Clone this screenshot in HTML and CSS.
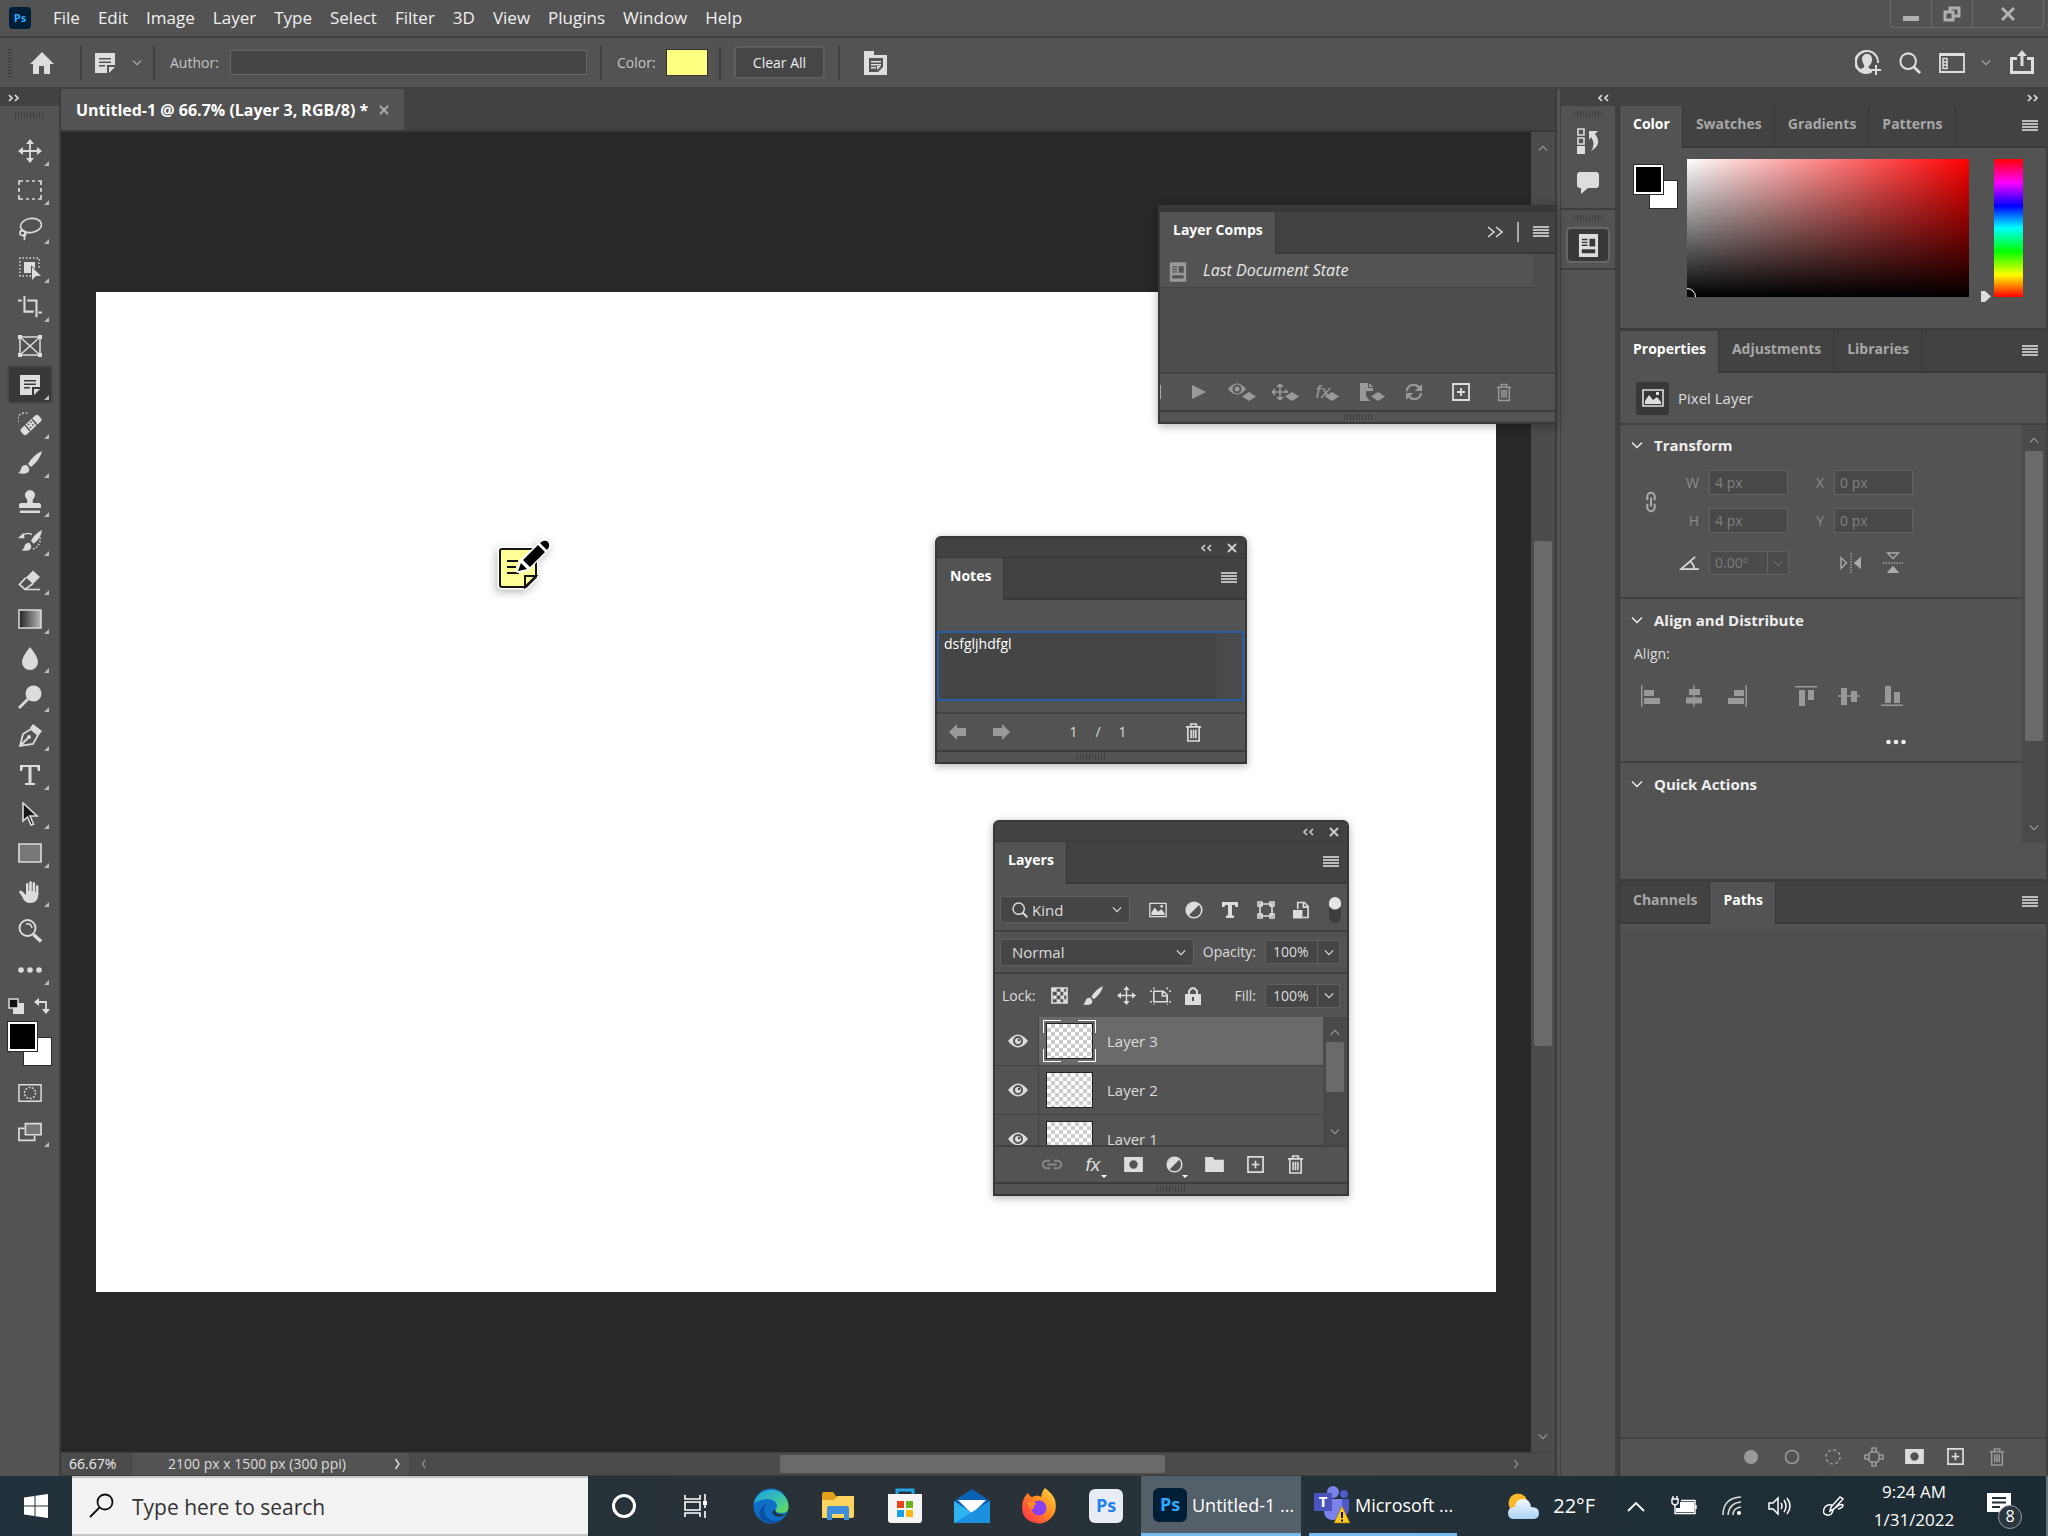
FILE: index.html
```html
<!DOCTYPE html>
<html lang="en">
<head>
<meta charset="utf-8">
<title>Untitled-1 @ 66.7% (Layer 3, RGB/8) *</title>
<link rel="stylesheet" href="styles.css">
</head>
<body>
<svg class="sprite" aria-hidden="true">
  <defs>
    <linearGradient id="g-tool"><stop offset="0" stop-color="#222"/><stop offset="1" stop-color="#bbb"/></linearGradient>
    <linearGradient id="g-edge" x1="0" y1="0" x2="1" y2="1"><stop offset="0" stop-color="#1b9de2"/><stop offset=".5" stop-color="#35c1b5"/><stop offset="1" stop-color="#6ddb52"/></linearGradient>
    <linearGradient id="g-fox" x1="1" y1="0" x2="0" y2="1"><stop offset="0" stop-color="#ffe14a"/><stop offset=".45" stop-color="#ff8a1f"/><stop offset="1" stop-color="#ff2354"/></linearGradient>
    <linearGradient id="g-cloud" x1="0" y1="0" x2="0" y2="1"><stop offset="0" stop-color="#f4faff"/><stop offset="1" stop-color="#a9d3f3"/></linearGradient>
  </defs>
  <symbol id="menu" viewBox="0 0 16 12"><path fill="currentColor" d="M0 0h16v2H0zM0 3h16v2H0zM0 6h16v2H0zM0 9h16v2H0z"/></symbol>
  <symbol id="down" viewBox="0 0 12 8"><path fill="none" stroke="currentColor" stroke-width="1.4" d="M1 1.5 6 6.5l5-5"/></symbol>
  <symbol id="up" viewBox="0 0 12 8"><path fill="none" stroke="currentColor" stroke-width="1.4" d="M1 6.5 6 1.5l5 5"/></symbol>
  <symbol id="left" viewBox="0 0 8 12"><path fill="none" stroke="currentColor" stroke-width="1.4" d="M5.500 1 2 6l3.500 5"/></symbol>
  <symbol id="right" viewBox="0 0 8 12"><path fill="none" stroke="currentColor" stroke-width="1.4" d="M2.500 1 6 6l-3.500 5"/></symbol>
  <symbol id="collapse" viewBox="0 0 12 8"><path fill="none" stroke="currentColor" stroke-width="1.700" d="M5 1 2 4l3 3M11 1 8 4l3 3"/></symbol>
  <symbol id="expand" viewBox="0 0 12 8"><path fill="none" stroke="currentColor" stroke-width="1.700" d="M1 1l3 3-3 3M7 1l3 3-3 3"/></symbol>
  <symbol id="close" viewBox="0 0 10 10"><path fill="none" stroke="currentColor" stroke-width="2" d="M1 1l8 8M9 1 1 9"/></symbol>
  <symbol id="home" viewBox="0 0 24 24"><path fill="currentColor" d="M12 1 0 13h3v10h6v-8h5v8h6V13h4z"/></symbol>
  <symbol id="note" viewBox="0 0 24 24"><path fill="currentColor" fill-rule="evenodd" d="M2 2h20v12h-8v8H2zM6 7v1.500h12V7zM6 10.500V12h12v-1.500zM6 14v1.500h6V14zM16 16h6l-6 6z"/></symbol>
  <symbol id="notepanel" viewBox="0 0 26 26"><path fill="currentColor" fill-rule="evenodd" d="M2 1h10v4h13v20H2zM7 8v14h9l5-5V8z"/><path fill="currentColor" d="M9 11h10v1.500H9zM9 14h10v1.500H9zM9 17h5v1.500H9zM15 20v-4h4z"/></symbol>
  <symbol id="user" viewBox="0 0 26 26"><path fill="currentColor" fill-rule="evenodd" d="M12 0a12 12 0 1 0 5 22.500V19h-2l-1-1c-1-1 0-2 1-3 2-2 2-5 2-6 0-3-2-5-5-5S7 6 7 9c0 2 1 4 2 6 1 2-1 3-3 4l-2-1A10 10 0 1 1 22 13h2A12 12 0 0 0 12 0z"/><path stroke="currentColor" stroke-width="2" d="M21 15v10M16 20h10"/></symbol>
  <symbol id="search" viewBox="0 0 24 24"><circle cx="10" cy="10" r="8.500" fill="none" stroke="currentColor" stroke-width="2.200"/><path stroke="currentColor" stroke-width="3" d="m16 16 7 7"/></symbol>
  <symbol id="workspace" viewBox="0 0 26 22"><path fill="none" stroke="currentColor" stroke-width="1.800" d="M1 2h24v18H1z"/><path fill="currentColor" d="M1 1h24v3H1z"/><path fill="none" stroke="currentColor" stroke-width="1.500" d="M4 6.500h4v10H4zM4 10h4M4 13h4"/></symbol>
  <symbol id="share" viewBox="0 0 26 26"><path fill="none" stroke="currentColor" stroke-width="3" d="M8 8.500H2.500v14h21v-14H18M13 16V4"/><path fill="currentColor" d="M13 0 8 6h10z"/></symbol>
  <symbol id="move" viewBox="0 0 24 24"><path fill="none" stroke="currentColor" stroke-width="1.800" d="M12 3v18M3 12h18"/><path fill="currentColor" d="m12 0 4 5H8zM12 24l4-5H8zM0 12l5-4v8zM24 12l-5-4v8z"/></symbol>
  <symbol id="marquee" viewBox="0 0 24 24"><path fill="none" stroke="currentColor" stroke-width="1.700" d="M1 7V3h4M8 3h3M14 3h3M20 3h3v4M1 10v4M23 10v4M1 17v4h4M8 21h3M14 21h3M20 21h3v-4"/></symbol>
  <symbol id="lasso" viewBox="0 0 24 24"><g fill="none" stroke="currentColor" stroke-width="1.600"><ellipse cx="13" cy="8.500" rx="10.500" ry="7" transform="rotate(-8 13 8.500)"/><circle cx="4.500" cy="16" r="2.500"/><path d="M2 14c4-1 7 2 5 5M5 18c1 2 3 2 1 5"/></g></symbol>
  <symbol id="objsel" viewBox="0 0 24 24"><path fill="none" stroke="currentColor" stroke-width="1.500" stroke-dasharray="1.500 2" d="M13 20H2V2h19v10"/><path fill="currentColor" d="M6 6h11v7l-4-4v8H6zM14 11l9 9h-5l-4 4z"/></symbol>
  <symbol id="crop" viewBox="0 0 26 24"><path fill="none" stroke="currentColor" stroke-width="2.200" d="M0 5h4M7 0v17h10M10 5h10v18M22 18h4"/></symbol>
  <symbol id="frame" viewBox="0 0 24 24"><path fill="none" stroke="currentColor" stroke-width="1.500" d="M2 3h20v18H2zM2 3l20 18M22 3 2 21"/><path fill="currentColor" d="M0 1h4v4H0zM20 1h4v4h-4zM0 19h4v4H0zM20 19h4v4h-4z"/></symbol>
  <symbol id="heal" viewBox="0 0 24 24"><rect x="1" y="9" width="24" height="8" rx="2.500" fill="currentColor" transform="rotate(-43 13 13)"/><path stroke="#535353" stroke-width="1.300" d="m7 13 5 6M14 7l5 6"/><path stroke="#535353" stroke-width="1.600" stroke-dasharray="1.600 1.800" d="m10 13 5-5M12 16l6-6"/><path fill="none" stroke="currentColor" stroke-width="1.500" stroke-dasharray="1.500 2" d="M0 10V7q0-5 6-6h5"/></symbol>
  <symbol id="brush" viewBox="0 0 24 24"><path fill="currentColor" d="M24 0q-9 4-14 13l3 3Q22 9 24 0zM8.500 14q-5 0-5.500 4-1 3-3 4 9 2 11-2 1-3-2.500-6z"/></symbol>
  <symbol id="stamp" viewBox="0 0 24 24"><path fill="currentColor" d="M12 0a5 5 0 0 1 4 8q-2 2-1 5h6q2 0 2 3v2H1v-2q0-3 2-3h6q1-3-1-5a5 5 0 0 1 4-8zM2 20.500h20V23H2z"/></symbol>
  <symbol id="history" viewBox="0 0 26 24"><path fill="currentColor" d="M26 0q-8 4-12 12l3 3q8-6 9-15zM12.500 14q-5 0-5.500 4-1 3-3 4 8 2 10-2 1-3-1.500-6zM0 9l6-6 1 6z"/><path fill="none" stroke="currentColor" stroke-width="1.500" d="M5 6q5-4 10-1"/><path fill="none" stroke="currentColor" stroke-width="1.600" stroke-dasharray="1.600 2" d="M24 8q1 9-8 13"/></symbol>
  <symbol id="eraser" viewBox="0 0 24 24"><path fill="currentColor" d="M15 2.500 22 9 15 16 8 9.500z"/><path fill="none" stroke="currentColor" stroke-width="1.700" d="m8 9.500-6.500 7 5.500 5 8-6M7 21.500h15"/></symbol>
  <symbol id="gradient" viewBox="0 0 24 24"><path fill="url(#g-tool)" stroke="currentColor" stroke-width="1.500" d="M1 3h22v18H1z"/></symbol>
  <symbol id="drop" viewBox="0 0 24 24"><path fill="currentColor" d="M12 1q8 10 8 15a8 8 0 0 1-16 0Q4 11 12 1z"/></symbol>
  <symbol id="dodge" viewBox="0 0 24 24"><circle cx="15.500" cy="8.500" r="8" fill="currentColor"/><path stroke="currentColor" stroke-width="2.600" d="M1 23 10 14"/></symbol>
  <symbol id="pen" viewBox="0 0 24 24"><path fill="none" stroke="currentColor" stroke-width="1.800" d="M2 22 5 10l8-5 7 6-5 9zM2 22l8-8"/><circle cx="11" cy="13" r="2" fill="currentColor"/><path fill="currentColor" d="m15 0 9 7-3 4-9-7z"/></symbol>
  <symbol id="type" viewBox="0 0 24 24"><path fill="currentColor" d="M2 2h20v6h-2l-1-4h-5.500v16H17v2H7v-2h3.500V4H5L4 8H2z"/></symbol>
  <symbol id="typebold" viewBox="0 0 16 18"><path fill="currentColor" d="M0 1h16v5h-2.500l-.5-2h-3v10.500h2V17H4v-2.500h2V4H3l-.5 2H0z"/></symbol>
  <symbol id="arrow" viewBox="0 0 24 24"><path fill="#161616" stroke="currentColor" stroke-width="1.600" d="M5 1v18l4.500-4 3.500 8 2.500-1-3.500-8h7z"/></symbol>
  <symbol id="rect" viewBox="0 0 24 24"><path fill="#777" stroke="currentColor" stroke-width="1.600" d="M1 3h22v18H1z"/></symbol>
  <symbol id="hand" viewBox="0 0 24 24"><path fill="currentColor" d="M1 12q1-3 4 0l3 3V4q1-2 2.500 0v7h.700V2q1.300-2 2.600 0v9h.800V3q1.300-2 2.500 0v9h.800V6q1.300-2 2.500 0v9q-1 8-8 8-6 0-8-6z"/></symbol>
  <symbol id="zoom" viewBox="0 0 24 24"><circle cx="9.500" cy="9" r="8" fill="none" stroke="currentColor" stroke-width="1.900"/><path fill="none" stroke="currentColor" stroke-width="1.500" d="M8 5q5-1 6 4"/><path stroke="currentColor" stroke-width="3.400" d="m15.500 15.500 7.500 7"/></symbol>
  <symbol id="dots" viewBox="0 0 24 24"><g fill="currentColor"><circle cx="3" cy="12" r="2.800"/><circle cx="12" cy="12" r="2.800"/><circle cx="21" cy="12" r="2.800"/></g></symbol>
  <symbol id="defaults" viewBox="0 0 16 16"><path fill="#ddd" d="M5 5h11v11H5z"/><path fill="#111" stroke="#ddd" stroke-width="1.500" d="M1 1h9v9H1z"/></symbol>
  <symbol id="swap" viewBox="0 0 16 16"><path fill="none" stroke="currentColor" stroke-width="1.800" d="M4 4h8v8"/><path fill="currentColor" d="m0 4 5-4v8zM12 16l4-5H8z"/></symbol>
  <symbol id="mask" viewBox="0 0 26 20"><path fill="none" stroke="currentColor" stroke-width="1.600" d="M1 1h24v18H1z"/><circle cx="13" cy="10" r="6" fill="none" stroke="currentColor" stroke-width="1.600" stroke-dasharray="2 1.700"/></symbol>
  <symbol id="screen" viewBox="0 0 26 20"><path fill="none" stroke="currentColor" stroke-width="1.800" d="M7 6H1v13h17v-5"/><path fill="#777" stroke="currentColor" stroke-width="1.800" d="M8 1h17v12H8z"/></symbol>
  <symbol id="histpanel" viewBox="0 0 22 26"><path fill="none" stroke="currentColor" stroke-width="1.600" d="M1 1h6v6H1zM1 10h6v6H1z"/><path fill="currentColor" d="M0 18h8v8H0zM12 3h9l-3 3q8 10-4 17 5-7 0-14l-2 3z"/></symbol>
  <symbol id="comment" viewBox="0 0 24 24"><path fill="currentColor" d="M4 1h16q3 0 3 3v10q0 3-3 3h-8l-7 6v-6H4q-3 0-3-3V4q0-3 3-3z"/></symbol>
  <symbol id="comps" viewBox="0 0 22 24"><path fill="currentColor" fill-rule="evenodd" d="M1 0h20v24H1zM4 5v1.500h6V5zM4 8v1.500h6V8zM4 11v1.500h6V11zM12 5v8h6V5zM4 16v4h14v-4z"/></symbol>
  <symbol id="picture" viewBox="0 0 22 18"><path fill="none" stroke="currentColor" stroke-width="1.600" d="M1 1h20v16H1z"/><path fill="currentColor" d="M3 15v-3l4-6 4 5 4-3 4 5v2zM14 3h3v3h-3z"/></symbol>
  <symbol id="link" viewBox="0 0 24 12"><path fill="none" stroke="currentColor" stroke-width="2.200" d="M10 2H6a4 4 0 0 0 0 8h4M14 2h4a4 4 0 0 1 0 8h-4M7 6h10"/></symbol>
  <symbol id="vlink" viewBox="0 0 12 24"><path fill="none" stroke="currentColor" stroke-width="2.200" d="M2 10V6a4 4 0 0 1 8 0v4M2 14v4a4 4 0 0 0 8 0v-4M6 7v10"/></symbol>
  <symbol id="angle" viewBox="0 0 22 16"><path fill="none" stroke="currentColor" stroke-width="1.800" d="M17 1 2 14h19M12 6q4 3 4 8"/></symbol>
  <symbol id="fliph" viewBox="0 0 24 22"><path fill="none" stroke="currentColor" stroke-width="1.500" d="M1 5v12l6-6z"/><path fill="currentColor" d="M23 4v14l-8-7z"/><path stroke="currentColor" stroke-width="1.500" stroke-dasharray="1.500 1.500" d="M12 0v22"/></symbol>
  <symbol id="flipv" viewBox="0 0 22 24"><path fill="none" stroke="currentColor" stroke-width="1.500" d="M5 1h12l-6 6z"/><path fill="currentColor" d="M4 23h14l-7-8z"/><path stroke="currentColor" stroke-width="1.500" stroke-dasharray="1.500 1.500" d="M0 12h22"/></symbol>
  <symbol id="al" viewBox="0 0 22 22"><path fill="currentColor" d="M1 0h1.500v22H1zM4 5h10v6H4zM4 13h16v6H4z"/></symbol>
  <symbol id="ac" viewBox="0 0 22 22"><path fill="currentColor" d="M10.300 0h1.400v22h-1.400zM6 4h11v6H6zM3 12.500h16v6H3z"/></symbol>
  <symbol id="ar" viewBox="0 0 22 22"><path fill="currentColor" d="M19.500 0H21v22h-1.500zM8 5h10v6H8zM2 13h16v6H2z"/></symbol>
  <symbol id="at" viewBox="0 0 22 22"><path fill="currentColor" d="M0 1h22v1.500H0zM4 5h6v16H4zM13 5h6v10h-6z"/></symbol>
  <symbol id="am" viewBox="0 0 22 22"><path fill="currentColor" d="M0 10.300h22v1.400H0zM3 3h6v17H3zM13 6h6v11h-6z"/></symbol>
  <symbol id="ab" viewBox="0 0 22 22"><path fill="currentColor" d="M0 19.500h22V21H0zM4 1h6v17H4zM13 7h6v11h-6z"/></symbol>
  <symbol id="trash" viewBox="0 0 18 20"><path fill="none" stroke="currentColor" stroke-width="1.700" d="M1 4h16M6 4V1h6v3M3 4v15h12V4M6.500 7v9M9 7v9M11.500 7v9"/></symbol>
  <symbol id="plus" viewBox="0 0 18 18"><path fill="none" stroke="currentColor" stroke-width="1.800" d="M1 1h16v16H1zM9 5v8M5 9h8"/></symbol>
  <symbol id="adjust" viewBox="0 0 18 18"><circle cx="9" cy="9" r="7.800" fill="none" stroke="currentColor" stroke-width="1.600"/><path fill="currentColor" d="M14.500 3.500A7.800 7.800 0 0 0 3.500 14.500z"/></symbol>
  <symbol id="shape" viewBox="0 0 18 18"><path fill="none" stroke="currentColor" stroke-width="1.600" d="M3 3h12v12H3zM1 1h4v4H1zM13 1h4v4h-4zM1 13h4v4H1zM13 13h4v4h-4z"/></symbol>
  <symbol id="smart" viewBox="0 0 18 18"><path fill="none" stroke="currentColor" stroke-width="1.700" d="M5 8V1h7l4 4v12h-6M11 1v5h5"/><path fill="currentColor" d="M0 9h10v9H0z"/></symbol>
  <symbol id="checks" viewBox="0 0 18 18"><path fill="none" stroke="currentColor" stroke-width="1.700" d="M1 1h16v16H1z"/><path fill="currentColor" d="M1 1h5v4H1zM10 1h4v4h-4zM6 5h4v4H6zM13 5h4v4h-4zM2 9h4v4H2zM10 9h4v4h-4zM6 13h4v4H6zM13 13h4v4h-4z"/></symbol>
  <symbol id="artboard" viewBox="0 0 22 18"><path fill="none" stroke="currentColor" stroke-width="1.700" d="M4 4v11h14V8l-4-4zM13 4v5h5M0 4h2M0 15h2M20 15h2M4 0v2M18 0v2M4 17v1M18 17v1M20 4h2"/></symbol>
  <symbol id="lock" viewBox="0 0 16 18"><path fill="currentColor" fill-rule="evenodd" d="M0 7h16v11H0zM7 10v4h2v-4z"/><path fill="none" stroke="currentColor" stroke-width="2" d="M4 8V4q4-6 8 0v4"/></symbol>
  <symbol id="eye" viewBox="0 0 20 14"><path fill="currentColor" fill-rule="evenodd" d="M0 7q10-13 20 0-10 13-20 0zM10 2a5 5 0 1 0 0 10 5 5 0 0 0 0-10z"/><circle cx="10" cy="7" r="3" fill="currentColor"/><circle cx="11" cy="6" r="1.200" fill="#444"/></symbol>
  <symbol id="lmask" viewBox="0 0 20 16"><path fill="currentColor" fill-rule="evenodd" d="M0 0h20v16H0zM10 3.500a4.500 4.500 0 1 0 0 9 4.500 4.500 0 0 0 0-9z"/></symbol>
  <symbol id="folder" viewBox="0 0 20 16"><path fill="currentColor" d="M0 0h8l2 3h10v13H0z"/></symbol>
  <symbol id="play" viewBox="0 0 14 14"><path fill="currentColor" d="m0 0 14 7-14 7z"/></symbol>
  <symbol id="compeye" viewBox="0 0 28 18"><path fill="currentColor" fill-rule="evenodd" d="M0 6Q9-5 18 6 9 17 0 6zM9 1.500a4.500 4.500 0 1 0 0 9 4.500 4.500 0 0 0 0-9z"/><circle cx="9" cy="6" r="2.500" fill="currentColor"/><path fill="currentColor" d="m21 9 7 4.500-7 4.500-7-4.500z"/></symbol>
  <symbol id="compmove" viewBox="0 0 28 18"><path fill="none" stroke="currentColor" stroke-width="1.600" d="M9 1v16M1 9h16"/><path fill="currentColor" d="m9 0 4 4H5zM9 18l4-4H5zM0 9l4-4v8zM18 9l-4-3v4zM21 9l7 4.500-7 4.500-7-4.500z"/></symbol>
  <symbol id="diamond" viewBox="0 0 14 9"><path fill="currentColor" d="m7 0 7 4.500L7 9 0 4.500z"/></symbol>
  <symbol id="compfile" viewBox="0 0 28 18"><path fill="currentColor" d="M3 0h8v5h5v3H9v5l4 5H3zM12 0l4 4h-4zM21 9l7 4.500-7 4.500-7-4.500z"/></symbol>
  <symbol id="refresh" viewBox="0 0 20 20"><path fill="none" stroke="currentColor" stroke-width="2.400" d="M2 9q1-7 8-7 4 0 6 4M18 11q-1 7-8 7-4 0-6-4"/><path fill="currentColor" d="M19 1v8h-8zM1 19v-8h8z"/></symbol>
  <symbol id="aleft" viewBox="0 0 18 16"><path fill="currentColor" d="m0 8 8-8v4h9v8H8v4z"/></symbol>
  <symbol id="aright" viewBox="0 0 18 16"><path fill="currentColor" d="M17 8 9 0v4H0v8h9v4z"/></symbol>
  <symbol id="pathnode" viewBox="0 0 20 20"><g fill="none" stroke="currentColor" stroke-width="1.600"><circle cx="10" cy="10" r="6"/><path fill="#535353" d="M8 1h4v4H8zM8 15h4v4H8zM1 8h4v4H1zM15 8h4v4h-4z"/></g></symbol>
</svg>

<header class="menubar">
  <svg class="pslogo" viewBox="0 0 22 22"><rect width="22" height="22" rx="4" fill="#001e36"/><text x="11" y="15" text-anchor="middle" class="ps-s">Ps</text></svg>
  <nav class="menus">
    <button>File</button><button>Edit</button><button>Image</button><button>Layer</button><button>Type</button><button>Select</button><button>Filter</button><button>3D</button><button>View</button><button>Plugins</button><button>Window</button><button>Help</button>
  </nav>
  <div class="wincontrols">
    <button aria-label="Minimize"><svg width="16" height="14" viewBox="0 0 16 14"><path fill="#b0b0b0" d="M0 9h16v5H0z"/></svg></button>
    <button aria-label="Restore"><svg width="18" height="16" viewBox="0 0 18 16"><path fill="none" stroke="#b0b0b0" stroke-width="3" d="M7 6V2h9v8h-5M2 6h8v8H2z"/></svg></button>
    <button class="wide" aria-label="Close"><svg width="16" height="14" viewBox="0 0 16 14"><path stroke="#b0b0b0" stroke-width="3" d="m2 1 12 12M14 1 2 13"/></svg></button>
  </div>
</header>

<div class="optionsbar">
  <span class="vgrip"></span>
  <button class="ib home" aria-label="Home"><svg width="24" height="24"><use href="#home"/></svg></button>
  <button class="ib cell notecell" aria-label="Note tool"><svg width="24" height="24"><use href="#note"/></svg><svg class="dim" width="10" height="7"><use href="#down"/></svg></button>
  <div class="cell author"><label for="author">Author:</label><input id="author" type="text"></div>
  <div class="cell colorcell"><label for="notecolor">Color:</label><button id="notecolor" class="notecolor" aria-label="Note color"></button></div>
  <div class="cell clearcell"><button class="clear">Clear All</button></div>
  <div class="cell panelcell"><button class="ib" aria-label="Notes panel"><svg width="26" height="26"><use href="#notepanel"/></svg></button></div>
  <div class="optright">
    <button class="ib" aria-label="Account"><svg width="26" height="26"><use href="#user"/></svg></button>
    <button class="ib" aria-label="Search"><svg width="22" height="22"><use href="#search"/></svg></button>
    <button class="ib wsp" aria-label="Workspace"><svg width="26" height="22"><use href="#workspace"/></svg><svg class="dim" width="10" height="7"><use href="#down"/></svg></button>
    <button class="ib" aria-label="Share"><svg width="26" height="26"><use href="#share"/></svg></button>
  </div>
</div>

<main class="workspace">
  <aside class="tools">
    <div class="strip"><svg width="12" height="8"><use href="#expand"/></svg></div>
    <div class="grip"></div>
    <div class="toollist">
      <button aria-label="Move"><svg><use href="#move"/></svg></button>
      <button aria-label="Marquee"><svg><use href="#marquee"/></svg></button>
      <button aria-label="Lasso"><svg><use href="#lasso"/></svg></button>
      <button aria-label="Object selection"><svg><use href="#objsel"/></svg></button>
      <button aria-label="Crop"><svg><use href="#crop"/></svg></button>
      <button class="single" aria-label="Frame"><svg><use href="#frame"/></svg></button>
      <button class="on" aria-label="Note"><svg><use href="#note"/></svg></button>
      <button aria-label="Healing brush"><svg><use href="#heal"/></svg></button>
      <button aria-label="Brush"><svg><use href="#brush"/></svg></button>
      <button aria-label="Clone stamp"><svg><use href="#stamp"/></svg></button>
      <button aria-label="History brush"><svg><use href="#history"/></svg></button>
      <button aria-label="Eraser"><svg><use href="#eraser"/></svg></button>
      <button aria-label="Gradient"><svg><use href="#gradient"/></svg></button>
      <button aria-label="Blur"><svg><use href="#drop"/></svg></button>
      <button aria-label="Dodge"><svg><use href="#dodge"/></svg></button>
      <button aria-label="Pen"><svg><use href="#pen"/></svg></button>
      <button aria-label="Type"><svg><use href="#type"/></svg></button>
      <button aria-label="Path selection"><svg><use href="#arrow"/></svg></button>
      <button aria-label="Rectangle"><svg><use href="#rect"/></svg></button>
      <button aria-label="Hand"><svg><use href="#hand"/></svg></button>
      <button class="single" aria-label="Zoom"><svg><use href="#zoom"/></svg></button>
      <button aria-label="Edit toolbar"><svg><use href="#dots"/></svg></button>
    </div>
    <div class="mini"><svg width="16" height="16"><use href="#defaults"/></svg><svg width="16" height="16"><use href="#swap"/></svg></div>
    <div class="swatches"><span class="bg"></span><span class="fg"></span></div>
    <div class="toollist modes">
      <button class="single" aria-label="Quick mask"><svg><use href="#mask"/></svg></button>
      <button aria-label="Screen mode"><svg><use href="#screen"/></svg></button>
    </div>
  </aside>

  <section class="docarea">
    <div class="doctabs"><div class="doctab"><span>Untitled-1 @ 66.7% (Layer 3, RGB/8) *</span><button class="ib" aria-label="Close document"><svg width="10" height="10"><use href="#close"/></svg></button></div></div>
    <div class="canvasrow">
      <div class="canvas">
        <div class="page">
          <svg class="notemark" viewBox="0 0 64 58"><path class="halo" d="M12 10h34v28l-10 10H12q-2 0-2-2V12q0-2 2-2z"/><path fill="#ffff98" stroke="#151515" stroke-width="2" d="M12 10h34v28l-10 10H12q-2 0-2-2V12q0-2 2-2z"/><path fill="#ffff98" stroke="#151515" stroke-width="2" d="M46 37H35v11z"/><path stroke="#151515" stroke-width="2" d="M17 22h11M17 28h9M17 34h12"/><path fill="#fff" stroke="#fff" stroke-width="4" stroke-linejoin="round" d="m28 32 3-9L53 2q3-1 5 1t1 5L37 30z"/><path fill="#000" d="m28 32 3-8 6 6zM33 21 48 6l7 7-15 15zM50 4l3-2q3-1 5 1t1 5l-2 3z"/></svg>
        </div>
      </div>
      <div class="vscroll doc"><svg width="10" height="7"><use href="#up"/></svg><i></i><svg width="10" height="7"><use href="#down"/></svg></div>
    </div>
    <div class="status">
      <span class="zoomv">66.67%</span>
      <div class="docinfo"><span>2100 px x 1500 px (300 ppi)</span><svg width="8" height="12"><use href="#right"/></svg></div>
      <div class="hscroll"><svg width="8" height="10"><use href="#left"/></svg><i></i><svg width="8" height="10"><use href="#right"/></svg></div>
    </div>

    <section class="float comps">
      <div class="phead"><h2 class="tab on">Layer Comps</h2><div class="headtools"><svg width="16" height="12" viewBox="0 0 16 12"><path fill="none" stroke="#ddd" stroke-width="1.500" d="m1 1 6 5-6 5M9 1l6 5-6 5"/></svg><b></b><svg class="mi" width="16" height="12"><use href="#menu"/></svg></div></div>
      <div class="compbody"><div class="complist"><div class="comprow"><svg width="18" height="20"><use href="#comps"/></svg><em>Last Document State</em></div></div></div>
      <div class="pfoot compfoot">
        <button aria-label="Apply next"><svg width="14" height="14"><use href="#play"/></svg></button>
        <button aria-label="Visibility"><svg width="28" height="18"><use href="#compeye"/></svg></button>
        <button aria-label="Position"><svg width="28" height="18"><use href="#compmove"/></svg></button>
        <button class="fxd" aria-label="Appearance">fx<svg width="14" height="9"><use href="#diamond"/></svg></button>
        <button aria-label="Smart object"><svg width="28" height="18"><use href="#compfile"/></svg></button>
        <button aria-label="Update"><svg width="18" height="18"><use href="#refresh"/></svg></button>
        <button class="lit" aria-label="New comp"><svg width="18" height="18"><use href="#plus"/></svg></button>
        <button aria-label="Delete comp"><svg width="16" height="19"><use href="#trash"/></svg></button>
      </div>
      <div class="resize"><i class="grip"></i></div>
    </section>

    <section class="float notes">
      <div class="ptitle"><svg width="12" height="8"><use href="#collapse"/></svg><svg width="10" height="10"><use href="#close"/></svg></div>
      <div class="phead"><h2 class="tab on">Notes</h2><div class="headtools"><svg class="mi" width="16" height="12"><use href="#menu"/></svg></div></div>
      <div class="notesbody"><div class="notebox"><textarea aria-label="Note text">dsfgljhdfgl</textarea><i></i></div></div>
      <div class="pfoot notefoot">
        <button aria-label="Previous note"><svg width="18" height="16"><use href="#aleft"/></svg></button>
        <button aria-label="Next note"><svg width="18" height="16"><use href="#aright"/></svg></button>
        <span class="count"><span>1</span><span>/</span><span>1</span></span>
        <button class="lit" aria-label="Delete note"><svg width="17" height="19"><use href="#trash"/></svg></button>
      </div>
      <div class="resize"><i class="grip"></i></div>
    </section>

    <section class="float layers">
      <div class="ptitle"><svg width="12" height="8"><use href="#collapse"/></svg><svg width="10" height="10"><use href="#close"/></svg></div>
      <div class="phead"><h2 class="tab on">Layers</h2><div class="headtools"><svg class="mi" width="16" height="12"><use href="#menu"/></svg></div></div>
      <div class="lrow filter">
        <div class="sel kind"><svg class="lead" width="16" height="16"><use href="#search"/></svg><select aria-label="Filter type"><option>Kind</option></select><svg width="10" height="7"><use href="#down"/></svg></div>
        <button aria-label="Pixel"><svg width="18" height="16"><use href="#picture"/></svg></button>
        <button aria-label="Adjustment"><svg width="18" height="18"><use href="#adjust"/></svg></button>
        <button aria-label="Type"><svg width="16" height="18"><use href="#typebold"/></svg></button>
        <button aria-label="Shape"><svg width="18" height="18"><use href="#shape"/></svg></button>
        <button aria-label="Smart object"><svg width="17" height="18"><use href="#smart"/></svg></button>
        <label class="toggle"><input type="checkbox" checked aria-label="Filtering"></label>
      </div>
      <div class="lrow blend">
        <div class="sel mode"><select aria-label="Blend mode"><option>Normal</option></select><svg width="10" height="7"><use href="#down"/></svg></div>
        <label for="op">Opacity:</label><div class="num"><input id="op" value="100%"><button aria-label="Opacity slider"><svg width="10" height="7"><use href="#down"/></svg></button></div>
      </div>
      <div class="lrow locks">
        <span class="lbl">Lock:</span>
        <div class="lockset"><button aria-label="Transparent pixels"><svg width="17" height="17"><use href="#checks"/></svg></button><button aria-label="Image pixels"><svg width="20" height="20"><use href="#brush"/></svg></button><button aria-label="Position"><svg width="19" height="19"><use href="#move"/></svg></button><button aria-label="Artboard"><svg width="21" height="18"><use href="#artboard"/></svg></button><button aria-label="All"><svg width="16" height="18"><use href="#lock"/></svg></button></div>
        <label for="fill">Fill:</label><div class="num"><input id="fill" value="100%"><button aria-label="Fill slider"><svg width="10" height="7"><use href="#down"/></svg></button></div>
      </div>
      <div class="llist">
        <ul>
          <li class="on"><svg width="20" height="14"><use href="#eye"/></svg><div><i class="thumb"></i><span>Layer 3</span></div></li>
          <li><svg width="20" height="14"><use href="#eye"/></svg><div><i class="thumb"></i><span>Layer 2</span></div></li>
          <li><svg width="20" height="14"><use href="#eye"/></svg><div><i class="thumb"></i><span>Layer 1</span></div></li>
        </ul>
        <div class="vscroll"><svg width="10" height="7"><use href="#up"/></svg><i></i><svg width="10" height="7"><use href="#down"/></svg></div>
      </div>
      <div class="pfoot layerfoot">
        <button class="off" aria-label="Link layers"><svg width="22" height="11"><use href="#link"/></svg></button>
        <button class="fx caret" aria-label="Layer style">fx</button>
        <button aria-label="Add mask"><svg width="19" height="15"><use href="#lmask"/></svg></button>
        <button class="caret" aria-label="Adjustment layer"><svg width="17" height="17"><use href="#adjust"/></svg></button>
        <button aria-label="Group"><svg width="19" height="15"><use href="#folder"/></svg></button>
        <button aria-label="New layer"><svg width="17" height="17"><use href="#plus"/></svg></button>
        <button aria-label="Delete layer"><svg width="17" height="19"><use href="#trash"/></svg></button>
      </div>
      <div class="resize"><i class="grip"></i></div>
    </section>
  </section>

  <aside class="right">
    <div class="strip rstrip"><svg width="12" height="8"><use href="#collapse"/></svg><svg width="12" height="8"><use href="#expand"/></svg></div>
    <div class="rcols">
      <div class="dock">
        <div class="dgroup"><i class="grip"></i><button aria-label="History"><svg width="22" height="26"><use href="#histpanel"/></svg></button><button aria-label="Comments"><svg width="24" height="24"><use href="#comment"/></svg></button></div>
        <div class="dgroup"><i class="grip"></i><button class="on" aria-label="Layer comps"><svg width="21" height="23"><use href="#comps"/></svg></button></div>
      </div>
      <div class="panels">
        <section class="panel color">
          <div class="phead"><button class="tab on">Color</button><button class="tab">Swatches</button><button class="tab">Gradients</button><button class="tab">Patterns</button><div class="headtools"><svg class="mi" width="16" height="12"><use href="#menu"/></svg></div></div>
          <div class="picker"><div class="swatches"><span class="bg"></span><span class="fg"></span></div><div class="field"><i></i></div><div class="hue"><i></i></div></div>
        </section>
        <section class="panel props">
          <div class="phead"><button class="tab on">Properties</button><button class="tab">Adjustments</button><button class="tab">Libraries</button><div class="headtools"><svg class="mi" width="16" height="12"><use href="#menu"/></svg></div></div>
          <div class="kindrow"><span class="pixicon"><svg width="22" height="18"><use href="#picture"/></svg></span><span>Pixel Layer</span></div>
          <div class="propscroll">
            <div class="sections">
              <section class="sec tf">
                <h3><svg width="12" height="8"><use href="#down"/></svg>Transform</h3>
                <div class="tfgrid">
                  <svg class="vl" width="12" height="22"><use href="#vlink"/></svg>
                  <label for="w">W</label><input id="w" value="4 px" disabled><label for="x">X</label><input id="x" value="0 px" disabled>
                  <label for="h">H</label><input id="h" value="4 px" disabled><label for="y">Y</label><input id="y" value="0 px" disabled>
                </div>
                <div class="anglerow"><label for="ang"><svg width="21" height="15"><use href="#angle"/></svg></label><div class="num"><input id="ang" value="0.00º" disabled><button disabled aria-label="Angle presets"><svg width="10" height="7"><use href="#down"/></svg></button></div><button aria-label="Flip horizontal"><svg width="24" height="20"><use href="#fliph"/></svg></button><button aria-label="Flip vertical"><svg width="20" height="24"><use href="#flipv"/></svg></button></div>
              </section>
              <section class="sec align">
                <h3><svg width="12" height="8"><use href="#down"/></svg>Align and Distribute</h3>
                <p>Align:</p>
                <div class="aligns"><button aria-label="Left"><svg><use href="#al"/></svg></button><button aria-label="Center"><svg><use href="#ac"/></svg></button><button aria-label="Right"><svg><use href="#ar"/></svg></button><button class="gapl" aria-label="Top"><svg><use href="#at"/></svg></button><button aria-label="Middle"><svg><use href="#am"/></svg></button><button aria-label="Bottom"><svg><use href="#ab"/></svg></button></div>
                <button class="more" aria-label="More"><svg width="20" height="20"><use href="#dots"/></svg></button>
              </section>
              <section class="sec"><h3><svg width="12" height="8"><use href="#down"/></svg>Quick Actions</h3></section>
            </div>
            <div class="vscroll"><svg width="10" height="7"><use href="#up"/></svg><i></i><svg width="10" height="7"><use href="#down"/></svg></div>
          </div>
        </section>
        <section class="panel paths">
          <div class="phead"><button class="tab">Channels</button><button class="tab on">Paths</button><div class="headtools"><svg class="mi" width="16" height="12"><use href="#menu"/></svg></div></div>
          <div class="pathlist"></div>
          <div class="pfoot pathfoot">
            <button aria-label="Fill path"><svg width="18" height="18" viewBox="0 0 18 18"><circle cx="9" cy="9" r="7" fill="currentColor"/></svg></button>
            <button aria-label="Stroke path"><svg width="18" height="18" viewBox="0 0 18 18"><circle cx="9" cy="9" r="6.500" fill="none" stroke="currentColor" stroke-width="1.500"/></svg></button>
            <button aria-label="Load selection"><svg width="18" height="18" viewBox="0 0 18 18"><circle cx="9" cy="9" r="7" fill="none" stroke="currentColor" stroke-width="1.500" stroke-dasharray="3 2.500"/></svg></button>
            <button aria-label="Make path"><svg width="20" height="20"><use href="#pathnode"/></svg></button>
            <button class="lit" aria-label="Mask"><svg width="19" height="15"><use href="#lmask"/></svg></button>
            <button class="lit" aria-label="New path"><svg width="17" height="17"><use href="#plus"/></svg></button>
            <button aria-label="Delete path"><svg width="16" height="18"><use href="#trash"/></svg></button>
          </div>
        </section>
      </div>
    </div>
  </aside>
</main>

<footer class="taskbar">
  <button class="start" aria-label="Start"><svg width="24" height="24" viewBox="0 0 24 24"><path fill="#fff" d="M0 3.500 10.500 2v9.500H0zM11.500 1.800 24 0v11.500H11.500zM0 12.500h10.500V22L0 20.500zM11.500 12.500H24V24l-12.500-1.800z"/></svg></button>
  <label class="tsearch"><svg width="26" height="26" viewBox="0 0 26 26"><circle cx="16" cy="9" r="7.500" fill="none" stroke="#111" stroke-width="1.800"/><path stroke="#111" stroke-width="1.800" d="M10.500 14.500 1 24"/></svg><input type="text" placeholder="Type here to search" aria-label="Type here to search"></label>
  <div class="pins sys">
    <button aria-label="Cortana"><svg width="26" height="26" viewBox="0 0 26 26"><circle cx="13" cy="13" r="10.500" fill="none" stroke="#fff" stroke-width="3"/></svg></button>
    <button aria-label="Task view"><svg width="24" height="24" viewBox="0 0 24 24"><path fill="none" stroke="#fff" stroke-width="1.600" d="M1 1v4h15V1M1 8h15v8H1zM1 23v-4h15v4M21 0v8M21 11v3M21 17v7"/><path fill="#fff" d="M19 7h4v4h-4z"/></svg></button>
  </div>
  <div class="pins">
    <button aria-label="Edge"><svg width="36" height="36" viewBox="0 0 36 36"><circle cx="18" cy="18" r="17.500" fill="#0f6fc6"/><path fill="url(#g-edge)" d="M1 15a17.500 17.500 0 0 1 34.500 4q0 6-7 6-6 0-6-3 4-6-3-10-8-3-18.500 3z"/><path fill="#0c4f9e" d="M16 14q-8 6-3 14t17 3A17.500 17.500 0 0 1 8 31q-6-9 8-17z"/><path fill="#22313a" d="M22 22q0 6 11 4-6 5-12 1-4-4 1-5z"/></svg></button>
    <button aria-label="File Explorer"><svg width="32" height="28" viewBox="0 0 32 28"><path fill="#e0a11b" d="M0 2q0-2 2-2h9l3 4v6H0z"/><path fill="#ffd45e" d="M0 8h12l3-4h17v20q0 2-2 2H0z"/><path fill="#3d8fdb" d="M5 28V16q0-2 2-2h18q2 0 2 2v12h-5v-6H10v6z"/></svg></button>
    <button aria-label="Store"><svg width="36" height="36" viewBox="0 0 36 36"><path fill="none" stroke="#23a4e8" stroke-width="3" d="M10 8V2h16v6"/><path fill="#f5f5f5" d="M1 6h34v26q0 3-3 3H4q-3 0-3-3z"/><path fill="#e8421c" d="M10 13h7v7h-7z"/><path fill="#6fb31c" d="M19 13h7v7h-7z"/><path fill="#1c9ee8" d="M10 22h7v7h-7z"/><path fill="#fbb914" d="M19 22h7v7h-7z"/></svg></button>
    <button aria-label="Mail"><svg width="36" height="34" viewBox="0 0 36 34"><path fill="#0b62b5" d="M0 12 18 0l18 12-18 14z"/><path fill="#fff" d="M4 11h28L18 25z"/><path fill="#2fb4f0" d="M0 12 18 24v10H0z"/><path fill="#1a90df" d="M36 12 0 34h36z"/></svg></button>
    <button aria-label="Firefox"><svg width="34" height="36" viewBox="0 0 34 36"><path fill="url(#g-fox)" d="M6 5q1 3 4 4 6-3 9 0 1-6 4-9 8 6 10 12 3 12-5 19-8 7-18 3Q0 30 0 20 0 10 6 5z"/><circle cx="17" cy="20" r="7.500" fill="#8a3ff0"/><path fill="#ff8b1e" d="M5 15q5-3 10 1-5 1-3 5-5 0-7-6z"/></svg></button>
    <button aria-label="Photoshop"><svg width="34" height="34" viewBox="0 0 34 34"><rect width="34" height="34" rx="6" fill="#e8edf5"/><text x="17" y="23" text-anchor="middle" class="ps-light">Ps</text></svg></button>
  </div>
  <button class="app on"><svg width="34" height="34" viewBox="0 0 34 34"><rect width="34" height="34" rx="6" fill="#001e36"/><text x="17" y="23" text-anchor="middle" class="ps-m">Ps</text></svg>Untitled-1 ...</button>
  <button class="app"><svg width="36" height="38" viewBox="0 0 36 38"><circle cx="19" cy="6" r="6" fill="#7b83eb"/><circle cx="30" cy="8" r="4" fill="#5059c9"/><path fill="#5059c9" d="M24 13h11v11q-1 6-7 6h-4z"/><path fill="#7b83eb" d="M10 13h18v12q-1 9-9 9t-9-8z"/><path fill="#4b53bc" d="M0 7h18v18H0z"/><text x="9" y="21" text-anchor="middle" class="teams">T</text><path fill="#ffc91f" stroke="#8a6a00" stroke-width=".600" d="m28 20 8 17H20z"/><path stroke="#111" stroke-width="2" d="M28 26v6M28 33.500v2"/></svg>Microsoft ...</button>
  <div class="tray">
    <button class="weather"><svg width="32" height="26" viewBox="0 0 32 26"><circle cx="11" cy="10" r="9.500" fill="#fbb829"/><path fill="url(#g-cloud)" d="M7 26q-6 0-6-6t7-6q1-8 8-8t8 8q8 0 8 6t-6 6z"/></svg>22°F</button>
    <button aria-label="Hidden icons"><svg width="18" height="11" viewBox="0 0 18 11"><path fill="none" stroke="#fff" stroke-width="1.800" d="m1 10 8-8 8 8"/></svg></button>
    <button aria-label="Battery"><svg width="26" height="20" viewBox="0 0 26 20"><path fill="#fff" d="M9 6h14v10H5v-4h4z"/><path fill="none" stroke="#fff" stroke-width="1.400" d="M10 4.500h14v13H4v-6M25 9v4M2 0v3M6 0v3M1 3h6v4q-3 4-6 0zM4 9v4"/></svg></button>
    <button aria-label="Network"><svg width="20" height="20" viewBox="0 0 20 20"><path fill="none" stroke="#ddd" stroke-width="1.500" d="M1 19Q1 2 19 1M6 19Q7 7 19 6M11 19q0-7 8-8"/><circle cx="17" cy="17" r="2" fill="#fff"/></svg></button>
    <button aria-label="Volume"><svg width="24" height="20" viewBox="0 0 24 20"><path fill="none" stroke="#fff" stroke-width="1.500" d="M1 7h4l5-5v16l-5-5H1zM13 7q2 3 0 6M16 4q4 6 0 12M19 2q6 8 0 16"/></svg></button>
    <button class="penbtn" aria-label="Windows Ink"><svg width="22" height="20" viewBox="0 0 22 20"><path fill="none" stroke="#fff" stroke-width="1.500" d="M9 9q-6-1-8 4t3 6 6-5M7 15l1-4L17 1l3 2-9 10zM12 12q6-5 8-3 0 3-5 4"/></svg></button>
    <div class="clock"><time>9:24 AM</time><time>1/31/2022</time></div>
    <button class="notif" aria-label="Notifications"><svg width="24" height="26" viewBox="0 0 24 26"><path fill="#fff" d="M0 0h24v19h-6v6l-7-6H0z"/><path stroke="#22313a" stroke-width="1.800" d="M5 5h14M5 9.500h14M5 14h8"/></svg><span>8</span></button>
  </div>
</footer>
</body>
</html>
```
FILE: styles.css
```css
* { box-sizing: border-box; }
:root {
  --panel: #535353;
  --head: #424242;
  --line: #383838;
  --field: #454545;
  --text: #dddddd;
  --ui: "Open Sans", "Noto Sans", sans-serif;
}
body {
  margin: 0;
  height: 100vh;
  display: flex;
  flex-direction: column;
  overflow: hidden;
  background: var(--panel);
  color: var(--text);
  font: 14px/20px var(--ui);
}
button, input, select, textarea { font: inherit; color: inherit; }
button { border: 0; padding: 0; margin: 0; background: none; display: flex; align-items: center; justify-content: center; }
h2, h3, p, ul { margin: 0; padding: 0; font-size: 14px; }
svg { display: block; flex: none; }
i { display: block; }
.sprite { position: absolute; width: 0; height: 0; }
.ps-s { font: bold 11px var(--ui); fill: #31a8ff; }
.ps-m { font: bold 18px var(--ui); fill: #31a8ff; }
.ps-light { font: bold 18px var(--ui); fill: #2680eb; }
.teams { font: bold 15px var(--ui); fill: #fff; }

/* Menu bar */
.menubar { display: flex; align-items: center; height: 38px; flex: none; padding-left: 9px; border-bottom: 2px solid #414141; }
.pslogo { width: 22px; height: 22px; }
.menus { display: flex; gap: 18px; margin-left: 22px; flex: 1; }
.menus button { font-size: 17px; line-height: 24px; color: #f0f0f0; }
.wincontrols { display: flex; align-self: flex-start; height: 28px; margin-right: 4px; border: 1px solid #6a6a6a; border-top: 0; border-radius: 0 0 4px 4px; }
.wincontrols button { width: 41px; border-right: 1px solid #6a6a6a; }
.wincontrols .wide { width: 70px; border: 0; }

/* Options bar */
.optionsbar { display: flex; align-items: center; height: 51px; flex: none; padding-left: 8px; border-bottom: 2px solid #404040; }
.vgrip { width: 4px; height: 28px; background: repeating-linear-gradient(#3c3c3c 0 1px, transparent 1px 3px); }
.home { margin: 0 26px 0 18px; }
.cell { display: flex; align-items: center; height: 34px; border-left: 2px solid #3f3f3f; }
.notecell { gap: 15px; width: 73px; }
.dim { color: #aaa; }
.author { width: 447px; gap: 11px; padding: 0 13px 0 15px; color: #c4c4c4; }
.author input { flex: 1; min-width: 0; height: 25px; background: var(--field); border: 1px solid #686868; }
.colorcell { width: 119px; padding-left: 15px; gap: 10px; color: #c4c4c4; }
.notecolor { width: 42px; height: 27px; background: #ffff80; border: 1px solid #333; }
.clearcell { width: 119px; justify-content: center; }
.clear { width: 91px; height: 33px; background: #464646; border: 2px solid #5e5e5e; border-radius: 4px; color: #eee; }
.panelcell { padding-left: 22px; }
.optright { display: flex; align-items: center; margin-left: auto; gap: 18px; padding-right: 13px; }
.wsp { gap: 16px; }

/* Work area */
.workspace { flex: 1; min-height: 0; display: flex; }
.strip { height: 17px; background: var(--head); display: flex; align-items: center; }
.grip { width: 28px; height: 6px; background: repeating-linear-gradient(90deg, #3f3f3f 0 1px, transparent 1px 3px); }
.tools { width: 61px; border-right: 2px solid #3c3c3c; display: flex; flex-direction: column; flex: none; }
.tools .strip { padding-left: 8px; flex: none; }
.tools > .grip { margin: 6px 0 13px 15px; flex: none; }
.toollist button { position: relative; width: 46px; height: 39px; margin-left: 7px; border: 2px solid transparent; border-radius: 4px; color: #dcdcdc; }
.toollist svg { width: 24px; height: 24px; }
.toollist button::after { content: ""; position: absolute; right: 2px; bottom: 2px; width: 5px; height: 5px; background: #bbb; clip-path: polygon(100% 0, 100% 100%, 0 100%); }
.toollist .single::after { display: none; }
.toollist .on { background: #383838; border-color: #4a4a4a; }
.mini { display: flex; gap: 10px; padding: 9px 0 0 8px; }
.swatches { position: relative; width: 46px; height: 46px; flex: none; }
.tools .swatches { margin: 8px 0 5px 8px; }
.swatches span { position: absolute; width: 29px; height: 29px; }
.swatches .fg { left: 0; top: 0; background: #000; border: 2px solid #fff; outline: 1px solid #2c2c2c; }
.swatches .bg { left: 15px; top: 15px; background: #fff; border: 1px solid #2c2c2c; }

.docarea { flex: 1; min-width: 0; position: relative; display: flex; flex-direction: column; border-right: 2px solid #3c3c3c; }
.doctabs { height: 43px; flex: none; background: var(--head); border-bottom: 2px solid var(--line); display: flex; }
.doctab { display: flex; align-items: center; gap: 11px; padding: 0 15px; background: var(--panel); font-size: 16px; font-weight: bold; color: #fff; }
.doctab button { color: #aaa; }
.canvasrow { flex: 1; min-height: 0; display: flex; }
.canvas { flex: 1; min-width: 0; background: #282828; display: flex; align-items: center; justify-content: center; }
.page { width: calc(100% - 70px); aspect-ratio: 7 / 5; background: #fff; position: relative; }
.notemark { position: absolute; left: 394px; top: 247px; width: 64px; height: 58px; filter: drop-shadow(-2px 3px 4px rgba(0, 0, 0, .25)); }
.halo { fill: #fff; stroke: #fff; stroke-width: 5; }
.vscroll { display: flex; flex-direction: column; align-items: center; width: 24px; background: #4a4a4a; color: #999; flex: none; }
.vscroll i { width: 18px; background: #6a6a6a; border-radius: 2px; }
.vscroll svg:last-child { margin-top: auto; }
.vscroll.doc { padding: 13px 0 12px; background: #4b4b4b; }
.vscroll.doc i { height: 39%; margin-top: 389px; }
.status { height: 24px; flex: none; display: flex; border-top: 1px solid #404040; border-bottom: 1px solid #3c3c3c; background: #4b4b4b; font-size: 14px; }
.zoomv { width: 72px; padding: 1px 8px; color: #eee; }
.docinfo { width: 276px; display: flex; align-items: center; justify-content: space-between; padding: 0 8px 0 35px; background: var(--panel); }
.hscroll { flex: 1; display: flex; align-items: center; padding: 0 35px 0 11px; color: #999; }
.hscroll i { width: 35%; height: 18px; margin: 0 auto 0 32%; background: #6a6a6a; border-radius: 2px; }

/* Panel chrome shared by floating and docked panels */
.phead { display: flex; height: 42px; flex: none; background: var(--head); border-bottom: 2px solid var(--line); }
.tab { padding: 0 12px 0 13px; font-weight: bold; line-height: 36px; color: #a8a8a8; border-right: 1px solid var(--line); align-items: flex-start; }
.tab.on { background: var(--panel); color: #fff; margin-bottom: -2px; }
.headtools { margin-left: auto; display: flex; align-items: center; gap: 14px; padding-right: 8px; }
.headtools b { width: 2px; height: 20px; background: #aaa; }
.mi { color: #bbb; }
.pfoot { display: flex; align-items: center; height: 38px; flex: none; border-top: 2px solid #424242; color: #999; }
.pfoot .lit { color: #ddd; }
.resize { height: 12px; flex: none; border-top: 2px solid #3c3c3c; display: flex; justify-content: center; align-items: center; }

.float { position: absolute; display: flex; flex-direction: column; background: var(--panel); border: 2px solid #383838; box-shadow: 0 2px 9px rgba(0, 0, 0, .3); }
.ptitle { height: 20px; flex: none; display: flex; align-items: center; justify-content: flex-end; gap: 15px; padding-right: 8px; background: var(--head); border-bottom: 1px solid var(--line); color: #ccc; }
.notes, .layers { border-radius: 6px 6px 0 0; }

.comps { right: -2px; top: 116px; width: 399px; height: 219px; border-top-width: 7px; }
.comps .headtools { padding-right: 6px; }
.compbody { flex: 1; background: #4d4d4d; padding-right: 22px; }
.comprow { display: flex; align-items: center; gap: 16px; height: 34px; padding: 0 0 2px 9px; background: var(--panel); border-bottom: 1px solid #434343; color: #e8e8e8; font-size: 16px; }
.comprow svg { color: #999; margin-top: 4px; }
.compfoot { padding-left: 17px; }
.compfoot::before { content: ""; width: 1px; height: 14px; margin: 0 0 0 -17px; background: #aaa; }
.compfoot button { width: 43px; }
.compfoot button:first-of-type { margin-left: 16px; }
.compfoot .lit { margin-left: 4px; }
.fxd, .fx { font: italic 19px/22px "Liberation Sans", sans-serif; }
.fxd svg { margin: 8px 0 0 -5px; }

.notes { left: 874px; top: 447px; width: 312px; height: 228px; }
.notesbody { flex: 1; padding-top: 31px; }
.notebox { display: flex; height: 70px; margin-right: 1px; border: 2px solid #2a5ea4; background: #454545; }
.notebox textarea { flex: 1; min-width: 0; padding: 0 5px; border: 0; outline: 0; resize: none; background: transparent; color: #fff; line-height: 22px; }
.notebox i { width: 25px; background: #4a4a4a; }
.notefoot { padding: 0 43px 0 12px; }
.notefoot button:first-child { margin-right: 26px; }
.count { display: flex; gap: 18px; margin: 0 auto; color: #ddd; }

.layers { left: 932px; top: 731px; width: 356px; height: 376px; color: #ddd; }
.lrow { display: flex; align-items: center; flex: none; padding: 0 7px 0 5px; border-bottom: 2px solid #414141; }
.filter { height: 48px; padding-top: 5px; padding-right: 6px; justify-content: space-between; }
.sel { position: relative; display: flex; align-items: center; height: 27px; background: var(--field); border: 1px solid #606060; border-radius: 3px; padding: 0 7px 0 11px; }
.sel select { flex: 1; min-width: 0; appearance: none; border: 0; padding: 0; background: transparent; font-size: 15px; }
.kind { width: 130px; }
.lead { margin-right: 4px; }
.toggle { display: flex; }
.toggle input { appearance: none; width: 12px; height: 26px; margin: 0; border-radius: 6px; background: radial-gradient(circle at 50% 6px, #e4e4e4 0 6px, #3d3d3d 7px); }
.blend { height: 42px; gap: 9px; }
.mode { flex: 1; }
.num { display: flex; width: 75px; height: 24px; background: var(--field); border: 1px solid #606060; border-radius: 2px; }
.num input { width: 52px; min-width: 0; padding: 0 0 0 7px; border: 0; border-right: 1px solid #606060; background: transparent; }
.num button { flex: 1; }
.locks { height: 43px; gap: 9px; border: 0; padding-left: 7px; }
.lockset { display: flex; justify-content: space-between; flex: 1; padding: 0 24px 0 7px; }
.llist { flex: 1; min-height: 0; display: flex; overflow: hidden; }
.llist ul { flex: 1; list-style: none; }
.llist li { display: flex; align-items: center; height: 49px; padding-left: 13px; border-bottom: 1px solid #434343; }
.llist li > div { display: flex; align-items: center; flex: 1; height: 48px; margin-left: 10px; padding-left: 7px; gap: 14px; border-left: 1px solid #434343; font-size: 15px; }
.llist .on > div { background: #6a6a6a; }
.thumb { width: 47px; height: 36px; border: 1px solid #222; background: repeating-conic-gradient(#ccc 0 25%, #fff 0 50%) 0 0 / 8px 8px; }
.on .thumb { position: relative; }
.on .thumb::after { content: ""; position: absolute; inset: -4px; --c: linear-gradient(#fff, #fff); background: var(--c) 0 0 / 18px 1px, var(--c) 100% 0 / 18px 1px, var(--c) 0 100% / 18px 1px, var(--c) 100% 100% / 18px 1px, var(--c) 0 0 / 1px 13px, var(--c) 0 100% / 1px 13px, var(--c) 100% 0 / 1px 13px, var(--c) 100% 100% / 1px 13px; background-repeat: no-repeat; }
.llist .vscroll { padding: 12px 0 10px; gap: 6px; }
.llist .vscroll i { height: 50px; }
.layerfoot { padding: 0 31px 0 37px; height: 37px; color: #ddd; }
.layerfoot button { position: relative; width: 41px; height: 30px; }
.layerfoot .off { color: #888; }
.layerfoot .caret::after { content: ""; position: absolute; right: 6px; bottom: 2px; border: 3px solid transparent; border-top-color: #fff; border-bottom: 0; }

/* Docked column */
.right { width: 491px; flex: none; display: flex; flex-direction: column; padding-left: 3px; border-right: 2px solid #414141; }
.rstrip { justify-content: space-between; padding: 0 7px 0 37px; flex: none; }
.rcols { flex: 1; min-height: 0; display: flex; }
.dock { width: 59px; border-right: 4px solid #404040; border-left: 1px solid #404040; flex: none; }
.dgroup { display: flex; flex-direction: column; align-items: center; gap: 2px; padding: 5px 0; border-bottom: 2px solid #3e3e3e; }
.dgroup button { width: 44px; height: 40px; color: #ddd; }
.dgroup .grip { margin-bottom: 2px; }
.dgroup .on { height: 36px; margin-top: 2px; background: #383838; border: 2px solid #666; border-radius: 5px; }
.panels { flex: 1; min-width: 0; display: flex; flex-direction: column; border-left: 1px solid var(--line); }
.panel { display: flex; flex-direction: column; border-bottom: 3px solid #3d3d3d; flex: none; }
.color { height: 225px; }
.picker { display: flex; padding: 11px 23px 0 14px; }
.picker .swatches { width: 53px; padding: 0; top: 6px; }
.field { position: relative; overflow: hidden; flex: 1; height: 138px; margin-right: 25px; background: linear-gradient(transparent, #000), linear-gradient(90deg, #fff, #f00); }
.field i { position: absolute; left: -9px; bottom: -9px; width: 18px; height: 18px; border: 1px solid #fff; border-radius: 50%; }
.hue { position: relative; width: 29px; height: 138px; background: linear-gradient(#f00, #f0f 17%, #00f 34%, #0ff 50%, #0f0 67%, #ff0 84%, #f00); }
.hue i { position: absolute; left: -13px; bottom: -5px; width: 10px; height: 11px; background: #ddd; clip-path: polygon(0 0, 40% 0, 100% 50%, 40% 100%, 0 100%); }
.props { height: 551px; }
.kindrow { display: flex; align-items: center; gap: 9px; height: 52px; flex: none; padding-left: 16px; border-bottom: 2px solid #414141; font-size: 15px; }
.pixicon { width: 33px; height: 33px; display: flex; align-items: center; justify-content: center; background: #383838; border-radius: 3px; }
.propscroll { display: flex; height: 418px; }
.sections { flex: 1; }
.sec { border-bottom: 2px solid #414141; padding: 10px 0 0 11px; }
.sec:last-child { border: 0; padding-top: 11px; }
.sec h3 { display: flex; align-items: center; gap: 11px; font-size: 15px; color: #eee; }
.tf { height: 174px; }
.tfgrid { display: grid; grid-template-columns: 25px 29px 79px 26px 79px; grid-template-rows: 25px 25px; gap: 13px 10px; margin: 15px 0 0 4px; align-items: center; text-align: right; color: #8d8d8d; width: max-content; }
.vl { grid-row: span 2; justify-self: end; margin-right: 3px; color: #aaa; }
.tfgrid input { width: 79px; height: 25px; padding: 0 5px; border: 1px solid #626262; background: #484848; color: #808080; }
.anglerow { display: flex; align-items: center; margin: 18px 0 0 48px; color: #aaa; }
.anglerow label { margin-right: 9px; color: #ddd; }
.anglerow .num { width: 80px; background: #4b4b4b; border-color: #616161; color: #7c7c7c; margin-right: 50px; }
.anglerow .num input { width: 58px; padding-left: 5px; }
.anglerow .num button { color: #6c6c6c; }
.anglerow > button { margin-right: 20px; }
.align { height: 164px; padding-top: 11px; }
.align p { margin: 13px 0 0 3px; line-height: 22px; font-size: 14px; }
.aligns { display: flex; gap: 21px; margin: 20px 0 0 9px; color: #999; }
.aligns svg { width: 22px; height: 22px; }
.aligns .gapl { margin-left: 26px; }
.more { margin: 25px 0 0 255px; color: #eee; }
.propscroll .vscroll { padding: 12px 0; gap: 7px; }
.propscroll .vscroll i { height: 290px; }
.paths { flex: 1; border: 0; }
.pathlist { flex: 1; background: #4f4f4f; border-top: 6px solid var(--panel); }
.pathfoot { padding-right: 29px; justify-content: flex-end; height: 37px; margin-bottom: 2px; }
.pathfoot button { width: 41px; }

/* Taskbar */
.taskbar { height: 60px; flex: none; display: flex; background: linear-gradient(90deg, #21303a, #2a3237 45%, #26323a 60%, #1c2b33); color: #fff; font-size: 18px; }
.start { width: 72px; }
.tsearch { width: 516px; display: flex; align-items: center; gap: 17px; padding-left: 17px; background: #f3f3f3; border: 2px solid #c5c5c5; border-width: 2px 0; }
.tsearch input { flex: 1; min-width: 0; border: 0; padding: 2px 0 0; background: transparent; font-size: 21px; line-height: 30px; }
.tsearch input::placeholder { color: #333; opacity: 1; }
.pins { display: flex; }
.pins button { width: 67px; }
.sys { margin-right: 5px; }
.sys button { width: 72px; }
.app { width: 148px; margin-left: 8px; justify-content: flex-start; gap: 5px; padding-left: 5px; border-bottom: 3px solid #76b9ed; white-space: nowrap; }
.app.on { width: 160px; margin-left: 2px; padding-left: 12px; background: #53606a; }
.tray { display: flex; margin-left: auto; padding-right: 12px; border-right: 2px solid #687279; }
.tray button { width: 48px; }
.tray .weather { width: auto; gap: 14px; margin-right: 17px; font-size: 20px; }
.tray .penbtn { width: 60px; }
.clock { width: 100px; display: flex; flex-direction: column; justify-content: center; text-align: center; font-size: 17px; line-height: 28px; }
.tray .notif { position: relative; width: 70px; }
.notif span { position: absolute; left: 34px; top: 29px; width: 24px; height: 24px; border: 1px solid #999; border-radius: 50%; background: #2a3740; font-size: 16px; line-height: 21px; }
```
